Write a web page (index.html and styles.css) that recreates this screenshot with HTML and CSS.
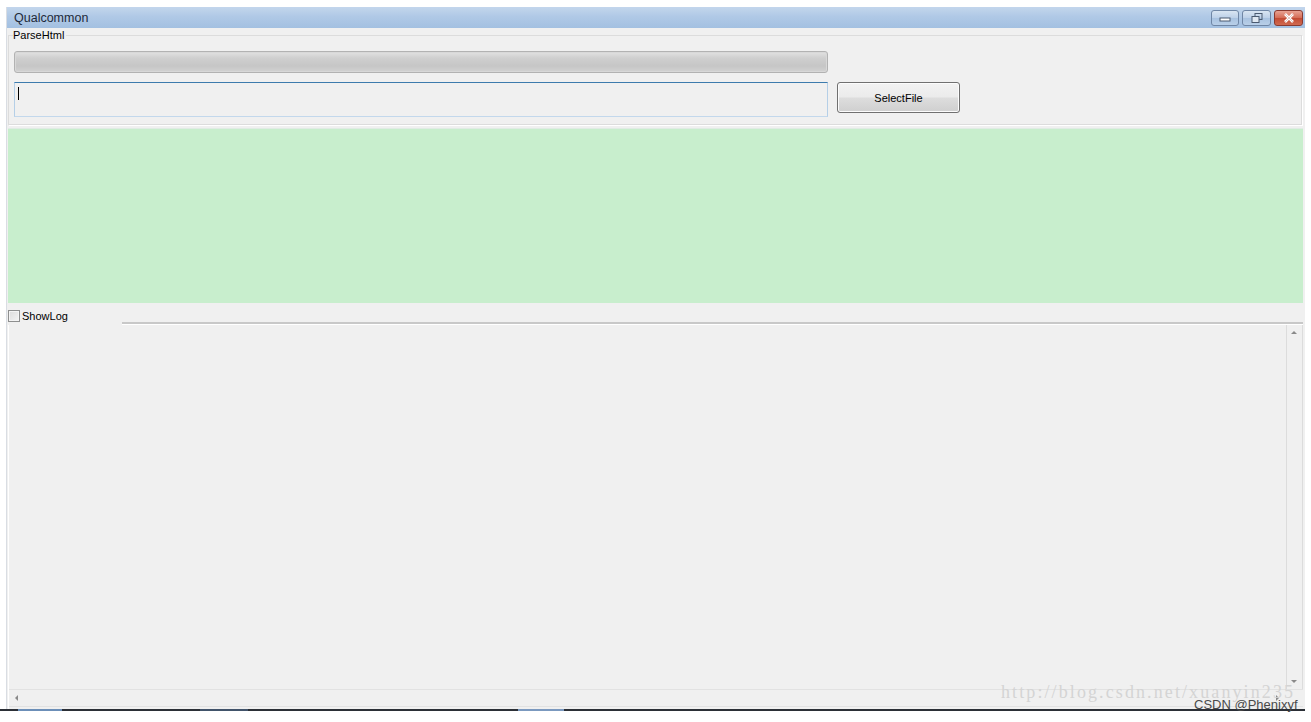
FILE: index.html
```html
<!DOCTYPE html>
<html>
<head>
<meta charset="utf-8">
<link rel="stylesheet" href="styles.css">
</head>
<body>
<div class="window">
  <div class="titlebar">
    <span class="title">Qualcommon</span>
    <div class="caption-btns">
      <div class="cbtn min"><svg width="14" height="8" viewBox="0 0 14 8"><rect x="2" y="4" width="10" height="3" fill="#fff" stroke="#4a5a70" stroke-width="1"/></svg></div>
      <div class="cbtn max"><svg width="14" height="12" viewBox="0 0 14 12"><rect x="5" y="1.5" width="7" height="6" fill="none" stroke="#4a5a70"/><rect x="2" y="4.5" width="7" height="6" fill="#dfe8f2" stroke="#4a5a70"/></svg></div>
      <div class="cbtn close"><svg width="14" height="12" viewBox="0 0 14 12"><path d="M3 2 L11 10 M11 2 L3 10" stroke="#fff" stroke-width="2.6"/><path d="M3 2 L11 10 M11 2 L3 10" stroke="#7a2218" stroke-width="0.6" opacity="0.4"/></svg></div>
    </div>
  </div>
  <div class="content">
    <fieldset class="group">
      <legend>ParseHtml</legend>
      <div class="progress"></div>
      <div class="row">
        <div class="input"><span class="caret"></span></div>
        <button class="btn">SelectFile</button>
      </div>
    </fieldset>
    <div class="green"></div>
    <div class="logbar">
      <label class="check"><span class="box"></span>ShowLog</label>
      <div class="rule"></div>
    </div>
    <div class="log">
      <div class="log-main">
        <div class="log-text"></div>
        <div class="vscroll"><span class="arr up"></span><span class="arr down"></span></div>
      </div>
      <div class="hscroll"><span class="arr left"></span><span class="arr right"></span></div>
    </div>
  </div>
  <div class="watermark">http://blog.csdn.net/xuanyin235</div>
  <div class="credit">CSDN @Phenixyf</div>
</div>
<div class="taskbar">
  <span class="seg s1"></span><span class="seg s2"></span><span class="seg s3"></span>
</div>
</body>
</html>
```
FILE: styles.css
```css
html, body {
  margin: 0;
  padding: 0;
  background: #ffffff;
  width: 1311px;
  height: 722px;
  overflow: hidden;
  font-family: "Liberation Sans", Arial, sans-serif;
}
.window {
  position: relative;
  margin: 7px 0 0 6px;
  width: 1299px;
  height: 702px;
  background: #f0f0f0;
  display: flex;
  flex-direction: column;
  box-sizing: border-box;
  border-left: 1px solid #d9dde3;
}
.titlebar {
  height: 21px;
  flex: none;
  background: linear-gradient(to bottom, #c3d6ec 0%, #b0c9e6 45%, #a3c0e1 100%);
  display: flex;
  align-items: center;
  justify-content: space-between;
  padding-left: 7px;
}
.title {
  font-size: 12.5px;
  color: #1e2a3a;
}
.caption-btns {
  display: flex;
  gap: 3px;
  align-self: flex-start;
  margin-top: 3px;
  margin-right: 2px;
}
.cbtn {
  height: 16px;
  border: 1px solid #6f86a5;
  border-radius: 3px;
  display: flex;
  align-items: center;
  justify-content: center;
  box-sizing: border-box;
  background: linear-gradient(to bottom, #d9e5f2 0%, #bcd0e8 50%, #a8c2e0 51%, #b9cfe8 100%);
}
.cbtn.min { width: 28px; }
.cbtn.max { width: 29px; }
.cbtn.close {
  width: 29px;
  border-color: #8a3a30;
  background: linear-gradient(to bottom, #e8a293 0%, #d46b55 50%, #c24a33 51%, #d06a50 100%);
}
.content {
  flex: 1;
  display: flex;
  flex-direction: column;
  padding: 0 2px 0 1px;
  min-height: 0;
}
.group {
  margin: 1px 0 0 0;
  padding: 9px 0 0 5px;
  border: 1px solid #dcdcdc;
  border-right-color: #ffffff;
  border-bottom-color: #ffffff;
  box-shadow: inset -1px -1px 0 #dcdcdc;
  height: 97px;
  box-sizing: border-box;
}
.group legend {
  font-size: 11px;
  color: #000;
  padding: 0 2px 0 0;
  margin-left: -1px;
  line-height: 13px;
}
.progress {
  width: 814px;
  height: 22px;
  box-sizing: border-box;
  border: 1px solid #b2b2b2;
  border-radius: 3px;
  background: linear-gradient(to bottom, #e2e2e2 0%, #cfcfcf 30%, #c6c6c6 70%, #d2d2d2 100%);
  box-shadow: inset 0 0 0 1px #d8d8d8;
}
.row {
  display: flex;
  margin-top: 9px;
  gap: 9px;
}
.input {
  width: 814px;
  height: 35px;
  box-sizing: border-box;
  border: 1px solid #abadb3;
  border-top-color: #3d7bad;
  border-left-color: #b5cfe7;
  border-right-color: #b5cfe7;
  border-bottom-color: #c3d8ec;
  background: #f0f0f0;
  padding: 4px 0 0 3px;
}
.caret {
  display: block;
  width: 1px;
  height: 13px;
  background: #000;
}
.btn {
  width: 123px;
  height: 31px;
  box-sizing: border-box;
  border: 1px solid #707070;
  border-radius: 3px;
  background: linear-gradient(to bottom, #f2f2f2 0%, #ebebeb 48%, #dddddd 52%, #cfcfcf 100%);
  box-shadow: inset 0 0 0 1px #fcfcfc;
  font-family: "Liberation Sans", Arial, sans-serif;
  font-size: 11px;
  color: #000;
  padding: 0;
}
.green {
  height: 174px;
  flex: none;
  margin-top: 2px;
  background: #c8eecd;
  border-top: 1px solid #e0ece4;
}
.logbar {
  height: 22px;
  flex: none;
  display: flex;
  align-items: flex-end;
}
.check {
  display: flex;
  align-items: center;
  font-size: 11px;
  color: #000;
  width: 114px;
  margin-bottom: 3px;
  gap: 2px;
}
.box {
  width: 12px;
  height: 12px;
  box-sizing: border-box;
  border: 1px solid #8e8f8f;
  background: linear-gradient(135deg, #dcdcdc 0%, #f4f4f4 100%);
  box-shadow: inset 0 0 0 1px #f4f4f4;
}
.rule {
  flex: 1;
  height: 2px;
  background: #c8c8c8;
  border-bottom: 1px solid #ffffff;
}
.log {
  flex: 1;
  display: flex;
  flex-direction: column;
  border-left: 1px solid #ffffff;
  min-height: 0;
}
.log-main {
  flex: 1;
  display: flex;
  min-height: 0;
}
.log-text {
  flex: 1;
}
.vscroll {
  width: 15px;
  border-left: 1px solid #dcdcdc;
  border-right: 1px solid #dcdcdc;
  background: #f0f0f0;
  position: relative;
}
.hscroll {
  height: 16px;
  flex: none;
  border-top: 1px solid #e2e2e2;
  border-bottom: 1px solid #e2e2e2;
  position: relative;
  margin-bottom: 2px;
}
.arr {
  position: absolute;
  width: 0;
  height: 0;
}
.arr.up {
  top: 6px;
  left: 4px;
  border-left: 3px solid transparent;
  border-right: 3px solid transparent;
  border-bottom: 3px solid #8a8a8a;
}
.arr.down {
  bottom: 6px;
  left: 4px;
  border-left: 3px solid transparent;
  border-right: 3px solid transparent;
  border-top: 3px solid #8a8a8a;
}
.arr.left {
  left: 6px;
  top: 5px;
  border-top: 3px solid transparent;
  border-bottom: 3px solid transparent;
  border-right: 3px solid #8a8a8a;
}
.arr.right {
  right: 24px;
  top: 5px;
  border-top: 3px solid transparent;
  border-bottom: 3px solid transparent;
  border-left: 3px solid #8a8a8a;
}
.watermark {
  position: absolute;
  left: 994px;
  top: 675px;
  font-family: "Liberation Serif", "DejaVu Serif", serif;
  font-size: 18px;
  letter-spacing: 2.1px;
  color: #d4d4d4;
  white-space: nowrap;
}
.credit {
  position: absolute;
  left: 1187px;
  top: 690px;
  font-family: "Liberation Sans", Arial, sans-serif;
  font-size: 13px;
  color: #4a4a4a;
  white-space: nowrap;
}
.taskbar {
  width: 1305px;
  height: 2px;
  background: #2b2f36;
  display: flex;
}
.seg { height: 2px; display: block; }
.s1 { margin-left: 18px; width: 44px; background: #6c8fb8; }
.s2 { margin-left: 138px; width: 48px; background: #41536a; }
.s3 { margin-left: 270px; width: 46px; background: #7b99bf; }
```
